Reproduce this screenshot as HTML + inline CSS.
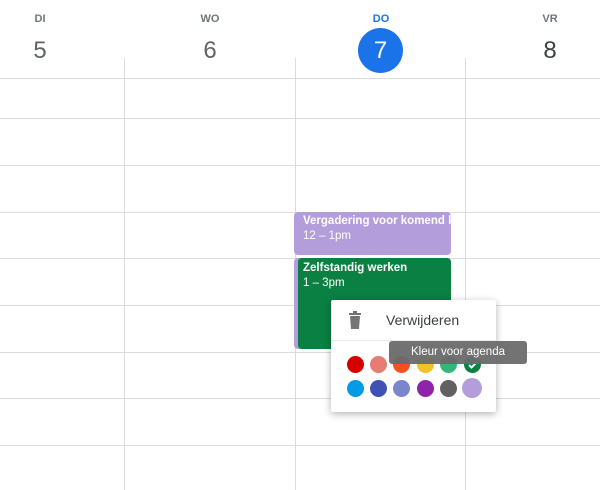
<!DOCTYPE html><html><head><style>
body{margin:0;width:600px;height:490px;background:#fff;font-family:"Liberation Sans",sans-serif;position:relative;overflow:hidden}
.a{position:absolute}
.h{background:#dadce0;height:1px;left:0;width:600px}
.v{background:#dadce0;width:1px;top:58px;height:432px}
.dn{font-size:11px;color:#70757a;text-align:center;width:60px;top:13px;font-weight:bold}
.dd{font-size:24px;color:#60646a;text-align:center;width:60px;top:37px}
.c{width:17px;height:17px;border-radius:50%}
</style></head><body>
<div class="a dn" style="left:10px">DI</div><div class="a dd" style="left:10px">5</div>
<div class="a dn" style="left:180px">WO</div><div class="a dd" style="left:180px">6</div>
<div class="a dn" style="left:351px;color:#1a73e8">DO</div>
<div class="a" style="left:358px;top:28px;width:45px;height:45px;border-radius:50%;background:#1a73e8;color:#fff;font-size:24px;text-align:center;line-height:45px">7</div>
<div class="a dn" style="left:520px">VR</div><div class="a dd" style="left:520px;color:#3c4043">8</div>
<div class="a h" style="top:78px"></div><div class="a h" style="top:118px"></div><div class="a h" style="top:165px"></div><div class="a h" style="top:212px"></div><div class="a h" style="top:258px"></div><div class="a h" style="top:305px"></div><div class="a h" style="top:352px"></div><div class="a h" style="top:398px"></div><div class="a h" style="top:445px"></div>
<div class="a v" style="left:124px"></div><div class="a v" style="left:295px"></div><div class="a v" style="left:465px"></div>
<div class="a" style="left:294px;top:212px;width:157px;height:43px;background:#b39ddb;border-radius:4px;color:#fff;font-size:11.5px;line-height:15px;padding:2px 0 0 9px;box-sizing:border-box;overflow:hidden;white-space:nowrap"><b>Vergadering voor komend kw</b><br>12 – 1pm</div>
<div class="a" style="left:294px;top:258px;width:157px;height:91px;background:#b39ddb;border-radius:4px"></div>
<div class="a" style="left:298px;top:258px;width:153px;height:91px;background:#0b8043;border-radius:4px;color:#fff;font-size:11.5px;line-height:15px;padding:3px 0 0 5px;box-sizing:border-box"><b>Zelfstandig werken</b><br>1 – 3pm</div>
<div class="a" style="left:331px;top:300px;width:165px;height:112px;background:#fff;box-shadow:0 2px 8px rgba(0,0,0,.3);border-radius:2px">
<svg class="a" style="left:17px;top:11px" width="14" height="18" viewBox="0 0 14 18"><path d="M1 2h12v2H1zM5 0h4v2H5zM2 5h10l-1 13H3z" fill="#757575"/></svg>
<div class="a" style="left:55px;top:12px;font-size:14px;color:#3c4043">Verwijderen</div>
<div class="a" style="left:0;top:40px;width:165px;height:1px;background:#e8eaed"></div>
<div class="a c" style="left:16px;top:56px;background:#d50000"></div>
<div class="a c" style="left:39px;top:56px;background:#e67c73"></div>
<div class="a c" style="left:62px;top:56px;background:#f4511e"></div>
<div class="a c" style="left:86px;top:56px;background:#f6bf26"></div>
<div class="a c" style="left:109px;top:56px;background:#33b679"></div>
<div class="a c" style="left:133px;top:56px;background:#0b8043"><svg width="17" height="17"><path d="M5 9l2.5 2.5L12 7" stroke="#fff" stroke-width="2" fill="none"/></svg></div>
<div class="a c" style="left:16px;top:80px;background:#039be5"></div>
<div class="a c" style="left:39px;top:80px;background:#3f51b5"></div>
<div class="a c" style="left:62px;top:80px;background:#7986cb"></div>
<div class="a c" style="left:86px;top:80px;background:#8e24aa"></div>
<div class="a c" style="left:109px;top:80px;background:#616161"></div>
<div class="a" style="left:131px;top:78px;width:20px;height:20px;border-radius:50%;background:#b39ddb"></div>
</div>
<div class="a" style="left:389px;top:341px;width:138px;height:23px;background:#6b6b6b;border-radius:3px;color:#fff;font-size:11.5px;line-height:23px;text-align:center;opacity:.95">Kleur voor agenda</div>
</body></html>
